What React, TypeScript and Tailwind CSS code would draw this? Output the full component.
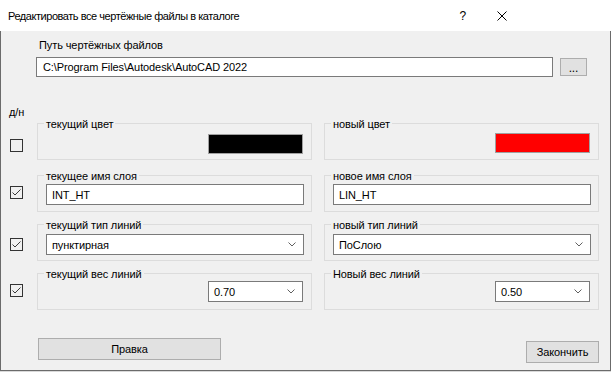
import React from "react";

const Check = () => (
  <svg width="13" height="13" viewBox="0 0 13 13" className="block">
    <polyline points="2.5,6.5 5,9 10.5,3.5" fill="none" stroke="#3a3a3a" strokeWidth="1" />
  </svg>
);

function CheckBox({ checked, mt }: { checked: boolean; mt: string }) {
  return (
    <div className={`ml-[9px] w-[13px] h-[13px] border border-[#333333] bg-[#f0f0f0] ${mt} relative`}>
      {checked && (
        <div className="absolute left-[-1px] top-[-1px]">
          <Check />
        </div>
      )}
    </div>
  );
}

function Group({ label, pt, children, extra }: { label: string; pt: string; children: React.ReactNode; extra?: string }) {
  return (
    <div className={`relative h-[37px] w-[275px] border border-[#dcdcdc] flex ${pt} ${extra ?? ""}`}>
      <span className="absolute left-[6px] top-[-8px] px-[2px] bg-[#f0f0f0] leading-[16px] text-black">{label}</span>
      {children}
    </div>
  );
}

const Chevron = () => (
  <svg width="8" height="5" viewBox="0 0 8 5" className="block">
    <polyline points="0.5,0.5 4,4 7.5,0.5" fill="none" stroke="#606060" strokeWidth="1" />
  </svg>
);

function Select({ value, w }: { value: string; w: string }) {
  return (
    <div className={`${w} h-[21px] border border-[#7a7a7a] bg-white flex items-center pl-[5px] pr-[7px]`}>
      <span className="flex-1 leading-[16px]">{value}</span>
      <Chevron />
    </div>
  );
}

function Input({ value }: { value: string }) {
  return (
    <div className="w-[258px] h-[21px] border border-[#7a7a7a] bg-white flex items-center pl-[5px]">
      <span className="leading-[16px]">{value}</span>
    </div>
  );
}

export default function App() {
  return (
    <div className="w-[611px] h-[372px] bg-[#d9d9d9] font-['Liberation_Sans',Arial,sans-serif] text-[11px] tracking-[-0.1px] text-black">
      <div className="w-[611px] h-[371px] flex flex-col">
        <div className="h-[31px] bg-white flex items-center shrink-0">
          <span className="ml-[8px] leading-[16px] tracking-[-0.45px] mt-[1px]">Редактировать все чертёжные файлы в каталоге</span>
          <span className="ml-auto leading-[16px] text-[12px]">?</span>
          <svg width="10" height="10" viewBox="0 0 10 10" className="ml-[31px] mr-[104px] block">
            <line x1="0.5" y1="0.5" x2="9.5" y2="9.5" stroke="#000" strokeWidth="1" />
            <line x1="9.5" y1="0.5" x2="0.5" y2="9.5" stroke="#000" strokeWidth="1" />
          </svg>
        </div>
        <div className="flex-1 bg-[#f0f0f0] border-l border-r border-b border-[#6b6b6b] flex flex-col">
          <div className="ml-[38px] mt-[6px] leading-[16px]">Путь чертёжных файлов</div>
          <div className="ml-[35px] mt-[4px] flex items-start">
            <div className="w-[517px] h-[20px] border border-[#7a7a7a] bg-white flex items-center pl-[6px]">
              <span className="leading-[16px]">C:\Program Files\Autodesk\AutoCAD 2022</span>
            </div>
            <div className="ml-[7px] mt-[1px] w-[27px] h-[18px] border border-[#adadad] bg-[#e1e1e1] flex items-center justify-center">
              <span className="leading-[10px] text-[12px] mt-[2px]">...</span>
            </div>
          </div>
          <div className="ml-[8px] mt-[27px] leading-[16px]">д/н</div>

          <div className="mt-[3px] flex items-start">
            <div className="w-[36px]">
              <CheckBox checked={false} mt="mt-[16px]" />
            </div>
            <Group label="текущий цвет" pt="pt-[10px]" extra="justify-end pr-[8px]">
              <div className="w-[95px] h-[20px] bg-black border border-[#a0a0a0]" />
            </Group>
            <Group label="новый цвет" pt="pt-[9px]" extra="ml-[12px] justify-end pr-[8px]">
              <div className="w-[95px] h-[20px] bg-[#ff0000] border border-[#a0a0a0]" />
            </Group>
          </div>

          <div className="mt-[15px] flex items-start">
            <div className="w-[36px]">
              <CheckBox checked mt="mt-[11px]" />
            </div>
            <Group label="текущее имя слоя" pt="pt-[8px]" extra="pl-[8px]">
              <Input value="INT_HT" />
            </Group>
            <Group label="новое имя слоя" pt="pt-[8px]" extra="ml-[12px] pl-[8px]">
              <Input value="LIN_HT" />
            </Group>
          </div>

          <div className="mt-[12px] flex items-start">
            <div className="w-[36px]">
              <CheckBox checked mt="mt-[14px]" />
            </div>
            <Group label="текущий тип линий" pt="pt-[9px]" extra="pl-[8px]">
              <Select value="пунктирная" w="w-[258px]" />
            </Group>
            <Group label="новый тип линий" pt="pt-[9px]" extra="ml-[12px] pl-[8px]">
              <Select value="ПоСлою" w="w-[258px]" />
            </Group>
          </div>

          <div className="mt-[12px] flex items-start">
            <div className="w-[36px]">
              <CheckBox checked mt="mt-[11px]" />
            </div>
            <Group label="текущий вес линий" pt="pt-[7px]" extra="justify-end pr-[8px]">
              <Select value="0.70" w="w-[95px]" />
            </Group>
            <Group label="Новый вес линий" pt="pt-[7px]" extra="ml-[12px] justify-end pr-[8px]">
              <Select value="0.50" w="w-[95px]" />
            </Group>
          </div>

          <div className="mt-[28px] flex items-start">
            <div className="ml-[37px] w-[183px] h-[22px] border border-[#adadad] bg-[#e1e1e1] flex items-center justify-center">
              <span className="leading-[16px]">Правка</span>
            </div>
            <div className="ml-[305px] mt-[3px] w-[73px] h-[22px] border border-[#adadad] bg-[#e1e1e1] flex items-center justify-center">
              <span className="leading-[16px]">Закончить</span>
            </div>
          </div>
        </div>
      </div>
    </div>
  );
}
